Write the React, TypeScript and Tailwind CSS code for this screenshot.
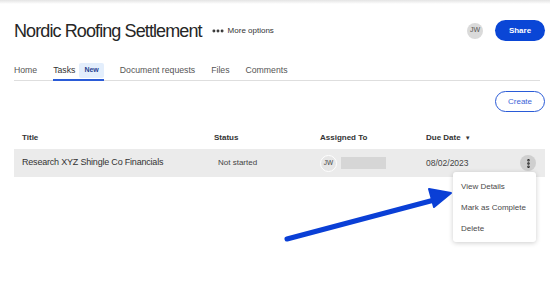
import { MoreHorizontal, MoreVertical } from "lucide-react";

const tabs = ["Home", "Tasks", "Document requests", "Files", "Comments"];

export default function App() {
  return (
    <div className="relative w-[550px] h-[287px] overflow-hidden bg-white font-['Liberation_Sans',sans-serif] text-[#2b2b2b]">
      {/* top shadow */}
      <div className="absolute inset-x-0 top-0 h-[4px] bg-gradient-to-b from-[#e4e4e4] to-white" />

      {/* header */}
      <div className="flex items-center pl-[14px] pr-[5px] pt-[20px] h-[41px]">
        <h1 className="text-[18px] leading-none tracking-[-0.9px] text-[#262626]">Nordic Roofing Settlement</h1>
        <button className="ml-[9px] flex items-center gap-[3px] text-[8px] text-[#333]">
          <MoreHorizontal className="w-[14px] h-[14px]" strokeWidth={3} />
          More options
        </button>
        <div className="ml-auto w-[16px] h-[16px] rounded-full bg-[#dadada] flex items-center justify-center text-[7px] text-[#555]">
          JW
        </div>
        <button className="ml-[12px] w-[50px] h-[21px] rounded-full bg-[#0a46d6] text-white text-[8px] font-bold">
          Share
        </button>
      </div>

      {/* tabs */}
      <div className="mt-[21px] ml-[14px] mr-[10px] flex items-end gap-[16px] border-b border-[#dedede] text-[8.7px] text-[#555]">
        {tabs.map((t) =>
          t === "Tasks" ? (
            <div key={t} className="flex items-center gap-[4px] h-[18px] -mb-px border-b-2 border-[#2a5bd7] pb-[1px] text-[#333]">
              Tasks
              <span className="px-[5px] py-[2px] rounded-[2px] bg-[#e3eefc] text-[#1f3f8f] text-[7px] font-bold">New</span>
            </div>
          ) : (
            <div key={t} className="h-[18px] flex items-center pb-[1px]">
              {t}
            </div>
          )
        )}
      </div>

      {/* create */}
      <div className="flex justify-end pr-[5px] mt-[10px]">
        <button className="w-[50px] h-[21px] rounded-full border-[1.5px] border-[#2a5bd7] text-[#3a64d8] text-[8px]">
          Create
        </button>
      </div>

      {/* table */}
      <div className="mx-[5px] ml-[14px] mt-[15px]">
        <div className="grid grid-cols-[192px_106px_106px_1fr] pl-[8px] h-[22px] items-center text-[8px] font-bold text-[#333]">
          <div>Title</div>
          <div>Status</div>
          <div>Assigned To</div>
          <div className="flex items-center gap-[4px]">
            Due Date
            <span className="text-[6px]">▼</span>
          </div>
        </div>
        <div className="grid grid-cols-[192px_106px_106px_1fr] pl-[8px] h-[28px] items-center bg-[#ebebeb]">
          <div className="text-[9px] tracking-[-0.2px] text-[#333]">Research XYZ Shingle Co Financials</div>
          <div className="pl-[4px] text-[8px] text-[#444]">Not started</div>
          <div className="flex items-center gap-[4px]">
            <div className="w-[17px] h-[17px] rounded-full bg-[#e6e6e6] border border-white flex items-center justify-center text-[6.5px] text-[#444]">
              JW
            </div>
            <div className="w-[45px] h-[12px] bg-[#d6d6d6]" />
          </div>
          <div className="flex items-center justify-between pr-[9px] text-[8.5px] text-[#444]">
            08/02/2023
            <div className="w-[16px] h-[16px] rounded-full bg-[#cfcfcf] flex items-center justify-center">
              <MoreVertical className="w-[11px] h-[11px] text-[#222]" strokeWidth={3.5} />
            </div>
          </div>
        </div>
      </div>

      {/* dropdown */}
      <div className="absolute left-[453px] top-[172px] w-[83px] h-[70px] rounded-[3px] bg-white shadow-[0_1px_5px_rgba(0,0,0,0.2)] flex flex-col justify-center gap-[12px] pl-[8px] text-[8px] leading-[9px] text-[#4a4a4a]">
        <div>View Details</div>
        <div>Mark as Complete</div>
        <div>Delete</div>
      </div>

      {/* arrow */}
      <svg className="absolute left-0 top-0 pointer-events-none" width="550" height="287">
        <line x1="287" y1="239" x2="438" y2="199" stroke="#0a3fd6" strokeWidth="5" strokeLinecap="round" />
        <polygon points="429,189 451,193 434,207" fill="#0a3fd6" stroke="#0a3fd6" strokeWidth="2" strokeLinejoin="round" />
      </svg>
    </div>
  );
}
